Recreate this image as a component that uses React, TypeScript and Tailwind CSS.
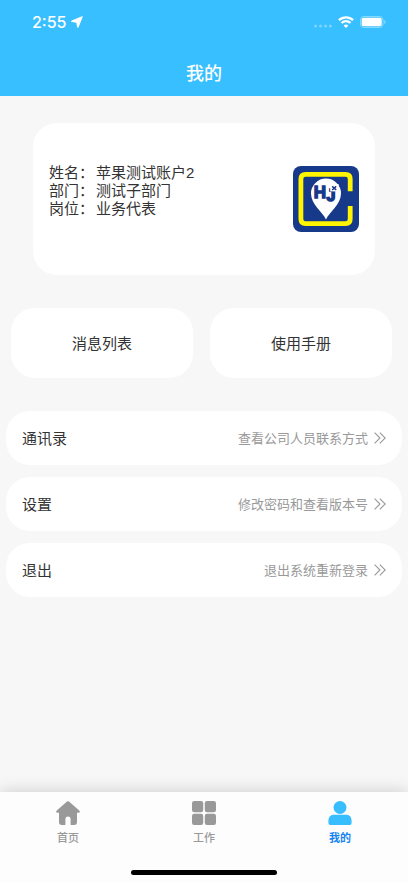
import { ReactNode } from "react";

const entries = [
  { title: "通讯录", hint: "查看公司人员联系方式" },
  { title: "设置", hint: "修改密码和查看版本号" },
  { title: "退出", hint: "退出系统重新登录" },
];

const profile = [
  { label: "姓名", value: "苹果测试账户2" },
  { label: "部门", value: "测试子部门" },
  { label: "岗位", value: "业务代表" },
];

function StatusBar() {
  return (
    <div className="flex h-11 items-center justify-between pl-8 pr-[22px]">
      <div className="flex items-center gap-1">
        <span className="font-['Inter'] text-base font-medium">2:55</span>
        <svg className="h-3 w-3" viewBox="0 0 12 12" fill="currentColor">
          <path d="M11.7 0.9 L7.6 11.3 Q6.7 12.2 6 11.1 L5.4 6.8 L1 6.1 Q-0.5 5.6 0.7 4.6 L10.9 0.3 Q12 0.1 11.7 0.9Z" />
        </svg>
      </div>
      <div className="flex items-center gap-[6px]">
        <svg className="h-3 w-[18px]" viewBox="0 0 18 12" fill="currentColor" opacity="0.35">
          <circle cx="1.6" cy="10" r="1.5" />
          <circle cx="6.6" cy="10" r="1.5" />
          <circle cx="11.6" cy="10" r="1.5" />
          <circle cx="16.4" cy="10" r="1.5" />
        </svg>
        <svg className="h-3 w-4" viewBox="0 0 16 12" fill="none" stroke="currentColor" strokeWidth="2.3">
          <path d="M0.9 4.2 A10.2 10.2 0 0 1 15.1 4.2" />
          <path d="M3.5 7 A6.4 6.4 0 0 1 12.5 7" />
          <path d="M8 11.9 L5.6 9.4 Q8 7.4 10.4 9.4Z" fill="currentColor" stroke="none" />
        </svg>
        <svg className="h-3 w-[26px]" viewBox="0 0 26 12" fill="currentColor">
          <rect x="0.5" y="0.5" width="22.5" height="11" rx="3.2" fill="none" stroke="currentColor" opacity="0.4" />
          <rect x="1.7" y="1.8" width="20" height="8.4" rx="1.8" />
          <path d="M24.3 4 Q25.6 4.6 25.6 6 Q25.6 7.4 24.3 8Z" opacity="0.5" />
        </svg>
      </div>
    </div>
  );
}

function Logo() {
  return (
    <svg className="h-[66px] w-[66px] shrink-0" viewBox="0 0 66 66">
      <rect width="66" height="66" rx="8" fill="#17398a" />
      <path
        d="M57.2 25.2 V13 Q57.2 8.4 52.6 8.4 H12.5 Q7.9 8.4 7.9 13 V53 Q7.9 57.6 12.5 57.6 H52.6 Q57.2 57.6 57.2 53 V40"
        fill="none"
        stroke="#fff500"
        strokeWidth="4.8"
      />
      <path d="M33 53.5 C30 46 18 38.5 18 27.4 A15 14.8 0 0 1 48 27.4 C48 38.5 36 46 33 53.5Z" fill="#fff" />
      <g fill="#17398a" stroke="#17398a" fontFamily="Liberation Sans, sans-serif" fontWeight="700">
        <text x="20.8" y="32.4" fontSize="17" strokeWidth="1.4">H</text>
        <text x="33.6" y="35" fontSize="16" strokeWidth="1.6">J</text>
      </g>
      <path d="M37.2 18 H45.6 V25.4 H37.2Z" fill="#fff" />
      <path d="M39.2 20.4 L43.2 24 M43.2 20.4 L39.2 24" stroke="#17398a" strokeWidth="1.5" />
    </svg>
  );
}

function DoubleChevron() {
  return (
    <svg className="h-3 w-3" viewBox="0 0 12 12" fill="none" stroke="currentColor" strokeWidth="1.1">
      <path d="M0.6 0.6 L6 6 L0.6 11.4 M5.8 0.6 L11.2 6 L5.8 11.4" />
    </svg>
  );
}

function Tab({ label, active, children }: { label: string; active?: boolean; children: ReactNode }) {
  return (
    <a
      href="#"
      aria-current={active ? "page" : undefined}
      className={`flex flex-1 flex-col items-center gap-1 text-[11px] leading-4 ${
        active ? "font-bold text-[#1684f0]" : "font-medium text-[#999999]"
      }`}
    >
      <svg className="h-6 w-6" viewBox="0 0 24 24" fill={active ? "#38bdff" : "#999999"}>
        {children}
      </svg>
      <span>{label}</span>
    </a>
  );
}

export default function App() {
  return (
    <div className="flex min-h-screen flex-col bg-[#f7f7f7] font-['Noto_Sans_CJK_SC',sans-serif] text-[#333333]">
      <header className="h-24 bg-[#38bfff] text-white">
        <StatusBar />
        <h1 className="pt-3 text-center text-lg leading-8 font-medium">我的</h1>
      </header>

      <main className="flex-1">
        <section className="mx-[33px] mt-[27px] flex h-[152px] items-center justify-between rounded-3xl bg-white px-4">
          <dl className="mb-4 font-['Liberation_Sans','Noto_Sans_CJK_SC',sans-serif] text-[15px] leading-[18px]">
            {profile.map((p) => (
              <div key={p.label} className="flex gap-0.5">
                <dt>{p.label}：</dt>
                <dd>{p.value}</dd>
              </div>
            ))}
          </dl>
          <Logo />
        </section>

        <div className="mt-[33px] grid grid-cols-2 gap-[17px] pr-4 pl-[11px]">
          <button className="h-[70px] rounded-3xl bg-white text-[15px]">消息列表</button>
          <button className="h-[70px] rounded-3xl bg-white text-[15px]">使用手册</button>
        </div>

        <div className="mt-[33px] flex flex-col gap-3 px-[6px]">
          {entries.map((e) => (
            <button key={e.title} className="flex h-[54px] items-center justify-between rounded-3xl bg-white px-4">
              <span className="text-[15px]">{e.title}</span>
              <span className="flex items-center gap-[6px] text-[13px] text-[#999999]">
                {e.hint}
                <DoubleChevron />
              </span>
            </button>
          ))}
        </div>
      </main>

      <nav className="h-[91px] bg-[#fdfdfd] pt-[9px] shadow-[0_0_16px_rgba(0,0,0,0.18)]">
        <div className="flex">
          <Tab label="首页">
            <path d="M11 0.6 Q12 -0.2 13 0.6 L23.5 9.8 Q24.4 11.6 22.6 11.8 H21 V21.6 Q21 24 18.6 24 H14.6 V18.2 Q14.6 15.6 12 15.6 Q9.4 15.6 9.4 18.2 V24 H5.4 Q3 24 3 21.6 V11.8 H1.4 Q-0.4 11.6 0.5 9.8Z" />
          </Tab>
          <Tab label="工作">
            <rect x="0" y="0" width="11.2" height="11.2" rx="2.2" />
            <rect x="12.8" y="0" width="11.2" height="11.2" rx="2.2" />
            <rect x="0" y="12.8" width="11.2" height="11.2" rx="2.2" />
            <rect x="12.8" y="12.8" width="11.2" height="11.2" rx="2.2" />
          </Tab>
          <Tab label="我的" active>
            <circle cx="12" cy="6.5" r="6.5" />
            <path d="M5.5 13.8 H18.5 Q23.6 14.4 23.6 20 V22 Q23.6 24 21.6 24 H2.4 Q0.4 24 0.4 22 V20 Q0.4 14.4 5.5 13.8Z" />
          </Tab>
        </div>
        <div className="mx-auto mt-[25px] h-[5px] w-[146px] rounded-full bg-black" />
      </nav>
    </div>
  );
}
